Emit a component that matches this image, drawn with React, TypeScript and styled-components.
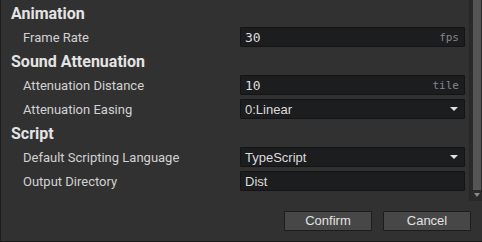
import React from "react";
import styled, { createGlobalStyle } from "styled-components";

const Global = createGlobalStyle`
  html, body { margin: 0; padding: 0; background: #313131; }
  * { box-sizing: border-box; }
`;

const Window = styled.div`
  width: 482px;
  height: 242px;
  display: flex;
  flex-direction: column;
  background: #313131;
  border-left: 1px solid #1c1c1c;
  border-bottom: 1px solid #1c1c1c;
  overflow: hidden;
`;

const ScrollArea = styled.div`
  display: flex;
  height: 201px;
  flex: none;
`;

const Content = styled.div`
  flex: 1;
  padding: 1px 4px 0 10px;
  display: flex;
  flex-direction: column;
`;

const SectionHeader = styled.div`
  height: 24px;
  display: flex;
  align-items: center;
  font-family: Roboto, "Liberation Sans", sans-serif;
  font-weight: 700;
  font-size: 16px;
  color: #e4e4e4;
`;

const Row = styled.div`
  height: 24px;
  display: grid;
  grid-template-columns: 1fr 225px;
  align-items: center;
  padding-left: 12px;
`;

const Label = styled.span`
  font-family: Roboto, "Liberation Sans", sans-serif;
  font-size: 13px;
  color: #d2d2d2;
`;

const Field = styled.div`
  height: 20px;
  display: flex;
  align-items: center;
  background: #1c1d1f;
  border: 1px solid #141414;
  border-radius: 1px;
  padding: 0 4px 0 4px;
  position: relative;
`;

const Value = styled.span<{ $mono?: boolean }>`
  flex: 1;
  font-family: ${(p) =>
    p.$mono ? `"DejaVu Sans Mono", monospace` : `"Liberation Sans", Arial, sans-serif`};
  font-size: 13px;
  color: #dcdcdc;
  white-space: nowrap;
`;

const Unit = styled.span`
  font-family: "DejaVu Sans Mono", monospace;
  font-size: 11px;
  color: #858585;
  padding-right: 1px;
`;

const Caret = styled.span`
  width: 0;
  height: 0;
  border-left: 4px solid transparent;
  border-right: 4px solid transparent;
  border-top: 4px solid #e2e2e2;
  margin-right: 2px;
`;

const Scrollbar = styled.div`
  width: 13px;
  flex: none;
  background: #2a2a2a;
  border-left: 1px solid #262626;
  display: flex;
  flex-direction: column;
  align-items: center;
  padding-left: 2px;
`;

const Thumb = styled.div`
  width: 8px;
  height: 190px;
  background: #555555;
`;

const DownArrow = styled.div`
  margin-top: 3px;
  width: 0;
  height: 0;
  border-left: 3px solid transparent;
  border-right: 3px solid transparent;
  border-top: 4px solid #8a8a8a;
`;

const Footer = styled.div`
  flex: 1;
  display: flex;
  justify-content: flex-end;
  align-items: flex-start;
  gap: 11px;
  padding: 10px 11px 0 0;
`;

const Button = styled.button`
  width: 88px;
  height: 20px;
  padding: 0;
  background: #474747;
  border: 1px solid #1c1c1c;
  border-radius: 1px;
  font-family: "Liberation Sans", Arial, sans-serif;
  font-size: 13px;
  color: #e2e2e2;
  line-height: 18px;
`;

type FieldProps = { value: string; unit?: string; mono?: boolean; select?: boolean };

const Input = ({ value, unit, mono, select }: FieldProps) => (
  <Field>
    <Value $mono={mono}>{value}</Value>
    {unit && <Unit>{unit}</Unit>}
    {select && <Caret />}
  </Field>
);

const sections: { title: string; rows: { label: string; field: FieldProps }[] }[] = [
  {
    title: "Animation",
    rows: [{ label: "Frame Rate", field: { value: "30", unit: "fps", mono: true } }],
  },
  {
    title: "Sound Attenuation",
    rows: [
      { label: "Attenuation Distance", field: { value: "10", unit: "tile", mono: true } },
      { label: "Attenuation Easing", field: { value: "0:Linear", select: true } },
    ],
  },
  {
    title: "Script",
    rows: [
      { label: "Default Scripting Language", field: { value: "TypeScript", select: true } },
      { label: "Output Directory", field: { value: "Dist" } },
    ],
  },
];

export default function App() {
  return (
    <>
      <Global />
      <Window>
        <ScrollArea>
          <Content>
            {sections.map((s) => (
              <React.Fragment key={s.title}>
                <SectionHeader>{s.title}</SectionHeader>
                {s.rows.map((r) => (
                  <Row key={r.label}>
                    <Label>{r.label}</Label>
                    <Input {...r.field} />
                  </Row>
                ))}
              </React.Fragment>
            ))}
          </Content>
          <Scrollbar>
            <Thumb />
            <DownArrow />
          </Scrollbar>
        </ScrollArea>
        <Footer>
          <Button>Confirm</Button>
          <Button>Cancel</Button>
        </Footer>
      </Window>
    </>
  );
}
